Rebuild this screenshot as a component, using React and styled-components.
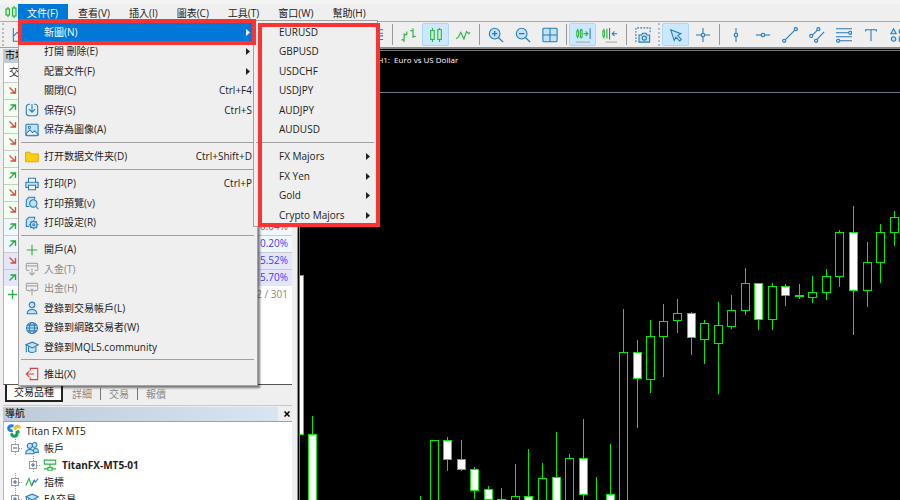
import React from 'react';
import styled, { createGlobalStyle, css } from 'styled-components';

const GlobalStyle = createGlobalStyle`
  * { box-sizing: border-box; }
  body {
    background: #efefef;
    color: #222;
    font: 10px/16px 'Open Sans', 'Noto Sans CJK TC', sans-serif;
    margin: 0;
    overflow: hidden;
  }
  button { color: inherit; font: inherit; }
  ul { list-style: none; margin: 0; padding: 0; }
`;

const Window = styled.div`
  display: flex;
  flex-direction: column;
  height: 100vh;
`;

const TitleStrip = styled.div`
  background: #f4f4f4;
  height: 4px;
`;

const MenuBar = styled.nav`
  align-items: stretch;
  display: flex;
  gap: 1px;
  height: 17px;
`;

const AppIcon = styled.svg`
  height: 14px;
  margin: 1px 0 0 5px;
  width: 12px;
`;

const MenuRoot = styled.div`
  position: relative;
`;

const MenuTitle = styled.button`
  background: ${props => props.$open ? '#0078d7' : 'transparent'};
  border: 0;
  color: ${props => props.$open ? '#fff' : '#222'};
  display: block;
  height: 17px;
  line-height: 16px;
  padding: 0 9px;
  white-space: nowrap;

  ${MenuRoot} & {
    padding-right: 10px;
  }
`;

const Popup = styled.ul`
  background: #efefef;
  border: 1px solid #a3a3a3;
  box-shadow: ${props => props.$shadow ? '2px 2px 2px rgba(0, 0, 0, 0.5)' : 'none'};
  color: #222;
  left: ${props => props.$left};
  padding: 2px 2px 1px;
  position: absolute;
  top: ${props => props.$top};
  width: ${props => props.$width};
  z-index: 5;
`;

const Entry = styled.li`
  height: 19px;
  position: relative;

  &:nth-child(even) {
    height: 20px;
  }
`;

const Command = styled.button`
  align-items: center;
  background: ${props => props.$active ? '#0078d7' : 'transparent'};
  border: 0;
  color: ${props => props.$active ? '#fff' : '#222'};
  display: flex;
  gap: 5px;
  height: 100%;
  line-height: 15px;
  padding: 0 3px 1px 4px;
  text-align: left;
  white-space: nowrap;
  width: 100%;

  &:disabled {
    color: #8a8a8a;
  }
`;

const IconSlot = styled.span`
  flex: none;
  height: 14px;
  width: 14px;

  svg {
    display: block;
    height: 14px;
    width: 14px;
  }
`;

const Label = styled.span`
  flex: 1;
`;

const Arrow = styled.svg`
  fill: currentColor;
  height: 7px;
  margin-right: 2px;
  width: 4px;
`;

const Divider = styled.li`
  border-bottom: 1px solid #a0a0a0;
  height: 3px;
  margin: 0 1px 4px 0;

  &:nth-child(even) {
    margin-bottom: 5px;
  }
`;

const Highlight = styled.div`
  border: 4px solid #fd3333;
  inset: ${props => props.$inset};
  pointer-events: none;
  position: absolute;
  z-index: 6;
`;

const Toolbar = styled.div`
  align-items: center;
  border-top: 1px solid #aaa;
  display: flex;
  height: 26px;
  overflow: hidden;
`;

const Tool = styled.button`
  align-items: center;
  background: ${props => props.$on ? '#cce8ff' : 'transparent'};
  border: 1px solid ${props => props.$on ? '#a9d8fb' : 'transparent'};
  border-radius: 2px;
  display: flex;
  flex: none;
  height: 23px;
  justify-content: center;
  padding: 0;
  width: 27px;

  svg {
    height: 16px;
    width: 16px;
  }
`;

const ToolSeparator = styled.span`
  border-left: 1px solid #999;
  flex: none;
  height: 21px;
  margin: 0 2px 0 3px;
`;

const Grip = styled.span`
  border-left: 2px dotted #bbb;
  flex: none;
  height: 23px;
  margin: 0 2px;
`;

const ToolGap = styled.span`
  flex: none;
  width: 329px;
`;

const Main = styled.main`
  display: flex;
  flex: 1;
  min-height: 0;
`;

const Sidebar = styled.aside`
  border-top: 1px solid #a0a0a0;
  display: flex;
  flex: none;
  flex-direction: column;
  overflow: hidden;
  padding: 1px 5px 0 3px;
  width: 297px;
`;

const PanelTitle = styled.h2`
  background: linear-gradient(90deg, #bdcbd9, #d9e6f3);
  color: #000;
  display: flex;
  flex: none;
  font-size: 10px;
  font-weight: 400;
  height: 14px;
  justify-content: space-between;
  line-height: 13px;
  margin: 0;
  padding-left: 2px;
`;

const CloseButton = styled.button`
  background: #efefef;
  border: 0;
  height: 14px;
  padding: 0 2px 0 6px;

  svg {
    display: block;
    height: 6px;
    width: 6px;
  }
`;

const Watch = styled.div`
  background: #fff;
  border-bottom: 1px solid #555;
  border-left: 1px solid #b5b5b5;
  flex: none;
  height: 322px;
`;

const Quotes = styled.table`
  border-collapse: collapse;
  width: 100%;

  th {
    font-weight: 400;
    height: 19px;
    padding: 0 5px;
    text-align: left;
  }

  td {
    height: 17px;
    line-height: 15px;
    padding: 0 4px;
  }

  td:last-child {
    text-align: right;
  }

  svg {
    display: block;
    height: 9px;
    width: 9px;
  }
`;

const tones = {
  green: '#f0fff0',
  blue: '#f0f8ff',
  violet: '#e6e6fa'
};

const QuoteRow = styled.tr`
  background: ${props => tones[props.$tone]};
  border-top: 1px solid #cbcbcb;
  color: ${props => props.$loss ? '#c63b3b' : '#3c3cff'};
`;

const TotalRow = styled.tr`
  color: #8a8a80;
`;

const Tabs = styled.div`
  align-items: flex-start;
  color: #8a8a8a;
  display: flex;
  flex: none;
  height: 20px;
  padding-left: 2px;
`;

const Tab = styled.button`
  background: transparent;
  border: 0;
  border-left: 1px solid ${props => props.$first ? 'transparent' : '#777'};
  height: 12px;
  line-height: 12px;
  margin-top: 3px;
  padding: 0 8px;

  ${props => props.$active && css`
    background: #fff;
    border: 2px solid #222;
    border-top: 0;
    color: #222;
    height: 17px;
    line-height: 15px;
    margin-top: 0;
    padding: 0 7px;
  `}
`;

const Navigator = styled.section`
  border-top: 1px solid #c8c8c8;
  display: flex;
  flex: 1;
  flex-direction: column;
  min-height: 0;
  padding-top: 1px;
`;

const Tree = styled.ul`
  background: #fff;
  border-left: 1px solid #b5b5b5;
  border-top: 1px solid #a0a0a0;
  flex: 1;
  min-height: 0;
  overflow: hidden;

  svg {
    flex: none;
    height: 14px;
    width: 14px;
  }
`;

const Node = styled.li`
  align-items: center;
  display: flex;
  font-weight: ${props => props.$bold ? 700 : 400};
  gap: 5px;
  height: 17px;
  line-height: 14px;
  padding-left: ${props => 3 + props.$depth * 18}px;
`;

const Expander = styled.svg`
  && {
    height: 17px;
    margin: 0 -7px 0 -14px;
    width: 16px;
  }
`;

const ChartFrame = styled.section`
  background: #000;
  border: solid #8a8a8a;
  border-width: 2px 0 0 1px;
  flex: 1;
  min-width: 0;
  padding: 1px 0 0 1px;
`;

const ChartView = styled.div`
  border: solid #777;
  border-width: 1px 0 0 1px;
  height: 100%;
  position: relative;
`;

const ChartTitle = styled.h1`
  color: #fff;
  font-size: 8px;
  font-weight: 400;
  left: 42px;
  line-height: 12px;
  margin: 0;
  position: absolute;
  top: 3px;
  white-space: pre;
`;

const Plot = styled.svg`
  display: block;
  height: 100%;
  width: 100%;
`;

const blue = { fill: '#bfe3f8', stroke: '#2a7ab8', strokeWidth: 1.2 };
const line = { fill: 'none', stroke: '#2a7ab8', strokeWidth: 1.2 };
const green = { fill: '#c9f5c9', stroke: '#2cb344', strokeWidth: 1.2 };
const greenLine = { fill: 'none', stroke: '#2cb344', strokeWidth: 1.3 };
const grey = { fill: 'none', stroke: '#aaa', strokeWidth: 1.3 };

const icons = {
  save: <g {...blue}><path fill="#e2f2fc" d="M5.500 1.500H4.500a3 3 0 0 0-3 3v7a3 3 0 0 0 3 3h7a3 3 0 0 0 3-3v-7a3 3 0 0 0-3-3h-1" /><path fill="none" d="M8 1v9.500M4.500 7 8 10.500 11.500 7" /></g>,
  image: <g {...blue}><rect x="1" y="1.500" width="14" height="13" rx="1" /><path fill="#fff" d="m1.500 12 4-4 3 3 2.500-2 4 4v1h-13.500z" /><circle cx="5" cy="5" r="1.200" fill="#fff" /></g>,
  folder: <path d="M.7 13.500v-11h5l1.500 2h8v9z" fill="#ffcc12" stroke="#d9a200" />,
  print: <g {...blue}><path fill="#fff" d="M4 6V1.500h8V6" /><path d="M1 12V6h14v6z" /><path fill="#fff" d="M4 9.500h8v5H4z" /></g>,
  preview: <g {...blue}><path d="M5 12H1.500V4.500l3-3H11V4" /><circle cx="9.500" cy="8.500" r="4.200" /><path d="m12.500 12 2.800 3" /></g>,
  setup: <g {...blue}><path d="M5 12H1.500V4.500l3-3H11V4" /><circle cx="10" cy="10" r="3.800" /><circle cx="10" cy="10" r="1.200" fill="#fff" /><path d="M10 4.500v2M10 13.500v2M4.500 10h2M13.500 10h2M6.200 6.200l1.300 1.300M12.500 12.500l1.300 1.300M13.800 6.200l-1.300 1.300M7.500 12.500l-1.300 1.300" /></g>,
  plus: <path d="M8 2v12M2 8h12" {...greenLine} />,
  deposit: <path d="M5 9.500H2.500q-1 0-1-1v-6q0-1 1-1h11q1 0 1 1v6q0 1-1 1H11M1.500 4.500h13M8 7v8M5 12l3 3 3-3" {...grey} />,
  withdraw: <path d="M5 9.500H2.500q-1 0-1-1v-6q0-1 1-1h11q1 0 1 1v6q0 1-1 1H11M1.500 4.500h13M8 15.500V8M5 11l3-3 3 3" {...grey} />,
  user: <g {...blue}><circle cx="8" cy="4.500" r="3.200" /><path d="M2.500 14.500c0-6.500 11-6.500 11 0z" /></g>,
  globe: <g {...blue}><circle cx="8" cy="8" r="6.300" /><ellipse cx="8" cy="8" rx="3" ry="6.300" /><path d="M1.700 8h12.600M2.700 4.700h10.600M2.700 11.300h10.600" /></g>,
  cap: <g {...blue}><path d="M4 7.500V13q4 2.500 8.500 0V7.500" /><path d="m.8 5.500 7.500-3 7 3-7 3.500z" /><path fill="none" d="M1.500 6v8" /></g>,
  exit: <path d="M6 4V1.500h8.500v13H6V12M10.500 8h-9M5 4.500 1.500 8 5 11.500" fill="none" stroke="#d9463f" strokeWidth="1.300" />,
  users: <g {...blue}><circle cx="11" cy="4.500" r="2.700" /><path d="M9 14q-.5-5.500 3-5.500t3.300 4.500H11" /><circle cx="5.500" cy="5.500" r="3" /><path d="M.8 14.500c0-6.500 9.700-6.500 9.700 0z" /></g>,
  server: <g {...greenLine}><path d="M1.500 2.500h13v4.500h-13zM8 7v4M1 12.500h4.500M10.500 12.500H15" /><path d="M5.500 11h5v3h-5z" /></g>,
  indicator: <g><path d="m1 12 3.500-8 3 8 3-6 1.500 2" {...greenLine} /><path d="m8 12 2.500-6 1.500 2 3-4" {...line} /></g>,
  logo: <g strokeWidth="3.400" fill="none"><path d="M7.500 2.500C3 1 1 4 2.500 6.500q1.500 2 4 1" stroke="#1b7ff0" /><path d="M9 6.500c.5-5 5.500-5 5-1.500" stroke="#f3bd18" /><path d="M5 10.500c1 5 7 4.500 6.500-1L14 8" stroke="#16a34a" /></g>,
  barChart: <path d="M3.500 17V7M3.500 8.500H7M.5 14.500h3M13.500 1.500v11M10.500 4h3M13.500 10.500h3M6.500 5v3.500" {...greenLine} />,
  candles: <g {...green}><path d="M5 1v3M5 14v3M13 1v3M13 14v3" /><rect x="3" y="4" width="4" height="10" /><rect x="11" y="3" width="4" height="11" /></g>,
  lineChart: <path d="m1 13 2.500-1L6.500 6l3.500 7.500L13 5l2.500 2.500L17 6" {...greenLine} />,
  zoomIn: <g {...blue}><circle cx="7.500" cy="7.500" r="6" /><path d="m12 12 5 5M4.500 7.500h6M7.500 4.500v6" strokeWidth="1.500" /></g>,
  zoomOut: <g {...blue}><circle cx="7.500" cy="7.500" r="6" /><path d="m12 12 5 5M4.500 7.500h6" strokeWidth="1.500" /></g>,
  tile: <g {...blue}><rect x="1" y="1.500" width="16" height="15" rx="1" /><path d="M9 1.500v15M1 9h16" /></g>,
  autoScroll: <g><path d="M3 2v11M7 2v11" {...greenLine} /><path d="M2 4.500h2v6H2zM6 3.500h2v8H6z" {...green} /><path d="M9.500 7.500H14M12 5l2.500 2.500L12 10" {...greenLine} /><path d="M17 1.500v12" {...line} /><path d="M1 17h16" stroke="#999" /></g>,
  shift: <g><path d="M2 2v11M5.500 2v11" {...greenLine} /><path d="M1 4.500h2v6H1z" {...green} /><path d="M8.500 1v13M17 7.500h-5M14 5l-2.500 2.500L14 10" {...line} /><path d="M4 17h13" stroke="#999" /></g>,
  camera: <g><path d="M1 17V1h16v5" strokeDasharray="2 1.500" {...line} /><g {...blue}><path d="M4.500 9h3l1-2h4l1 2h3v8h-12z" /><circle cx="10.500" cy="12.500" r="2.300" /></g></g>,
  windows: <g {...blue}><path d="M1 3h16M5 7h12M5 10h12M1 14h16" /></g>,
  areaChart: <path d="M1.500 1v15H17M2 10l4-4 3 3" {...line} />,
  cursor: <path d="m3 3 11.500 4.500-3.500 2 4 4.500-1.800 1.800-4.200-4.300-2 3.500z" {...blue} />,
  cross: <g {...blue}><path d="M9 1v16M1 9h16" /><circle cx="9" cy="9" r="2" /></g>,
  vertical: <g {...blue}><path d="M9 1v16" /><circle cx="9" cy="9" r="2" /></g>,
  horizontal: <g {...blue}><path d="M1 9h16" /><circle cx="9" cy="9" r="2" /></g>,
  trend: <g {...blue}><path d="M3 15 15 3" /><circle cx="2.500" cy="15.500" r="1.800" /><circle cx="15.500" cy="2.500" r="1.800" /></g>,
  channel: <g {...blue}><path d="m3 10 7-7M8 15l9-9.500" /><circle cx="2.500" cy="10" r="1.800" /><circle cx="10.500" cy="2.500" r="1.800" /><circle cx="8" cy="15.500" r="1.800" /></g>,
  fibo: <g {...blue}><path d="M0 2h18M0 6.500h18M0 11h18M0 15.500h18" /><circle cx="16" cy="6.500" r="1.800" /><circle cx="2.500" cy="15.500" r="1.800" /></g>,
  text: <path d="M3 5V3h12v2M9 3v13" {...line} />,
  shapes: <g {...blue}><path d="M4 2 1 7.500h6z" /><circle cx="13" cy="5" r="2.700" /><circle cx="4" cy="13.500" r="2.500" /><path d="M10.500 11h5v5h-5z" /></g>
};

function Icon({ name, size = 16 }) {
  return <svg viewBox={`0 0 ${size} ${size}`} aria-hidden="true">{icons[name]}</svg>;
}

const submenu = [
  { label: 'EURUSD' },
  { label: 'GBPUSD' },
  { label: 'USDCHF' },
  { label: 'USDJPY' },
  { label: 'AUDJPY' },
  { label: 'AUDUSD' },
  null,
  { label: 'FX Majors', more: true },
  { label: 'FX Yen', more: true },
  { label: 'Gold', more: true },
  { label: 'Crypto Majors', more: true }
];

const fileMenu = [
  { label: '新圖(N)', more: true, items: submenu },
  { label: '打開 刪除(E)', more: true },
  { label: '配置文件(F)', more: true },
  { label: '關閉(C)', keys: 'Ctrl+F4' },
  { label: '保存(S)', keys: 'Ctrl+S', icon: 'save' },
  { label: '保存為圖像(A)', icon: 'image' },
  null,
  { label: '打开数据文件夹(D)', keys: 'Ctrl+Shift+D', icon: 'folder' },
  null,
  { label: '打印(P)', keys: 'Ctrl+P', icon: 'print' },
  { label: '打印預覽(v)', icon: 'preview' },
  { label: '打印設定(R)', icon: 'setup' },
  null,
  { label: '開戶(A)', icon: 'plus' },
  { label: '入金(T)', icon: 'deposit', disabled: true },
  { label: '出金(H)', icon: 'withdraw', disabled: true },
  { label: '登錄到交易帳戶(L)', icon: 'user' },
  { label: '登錄到網路交易者(W)', icon: 'globe' },
  { label: '登錄到MQL5.community', icon: 'cap' },
  null,
  { label: '推出(X)', icon: 'exit' }
];

const menus = ['查看(V)', '插入(I)', '圖表(C)', '工具(T)', '窗口(W)', '幫助(H)'];

const tools = [
  '|', 'barChart', 'candles*', 'lineChart',
  '|', 'zoomIn', 'zoomOut', 'tile',
  '|', 'autoScroll*', 'shift',
  '|', 'camera',
  ':', 'cursor*', 'cross',
  '|', 'vertical', 'horizontal', 'trend', 'channel', 'fibo', 'text', 'shapes'
];

const quotes = [
  { tone: 'green' },
  { tone: 'green', up: true },
  { tone: 'green' },
  { tone: 'green' },
  { tone: 'green' },
  { tone: 'green', up: true },
  { tone: 'green' },
  { tone: 'green' },
  { tone: 'blue', up: true, change: '0.04%', loss: true },
  { tone: 'blue', up: true, change: '0.20%' },
  { tone: 'violet', change: '5.52%' },
  { tone: 'violet', up: true, change: '5.70%' }
];

// x, high, body top, body bottom, low, falling
const candles = [
  [0, 224, 224, 383, 383, 1],
  [13, 365, 383, 470, 470, 1],
  [121, 445, 470, 470, 470, 0],
  [135, 389, 389, 470, 470, 0],
  [148, 386, 389, 408, 420, 1],
  [162, 389, 408, 418, 420, 1],
  [175, 416, 418, 439, 448, 1],
  [189, 435, 438, 448, 460, 1],
  [202, 437, 448, 470, 470, 1],
  [216, 413, 445, 470, 470, 0],
  [229, 398, 445, 470, 470, 1],
  [243, 412, 427, 470, 470, 0],
  [257, 381, 426, 470, 470, 1],
  [270, 403, 407, 470, 470, 0],
  [284, 368, 407, 443, 470, 1],
  [297, 426, 443, 443, 470, 0],
  [311, 393, 443, 470, 470, 1],
  [324, 258, 301, 470, 470, 0],
  [338, 289, 301, 327, 377, 1],
  [351, 269, 285, 328, 342, 0],
  [364, 253, 270, 285, 326, 0],
  [378, 248, 262, 269, 282, 0],
  [392, 261, 262, 286, 304, 1],
  [405, 269, 272, 288, 313, 0],
  [419, 251, 274, 292, 343, 0],
  [432, 244, 259, 275, 278, 0],
  [446, 217, 232, 259, 264, 0],
  [459, 232, 232, 268, 279, 1],
  [473, 232, 235, 268, 279, 0],
  [486, 233, 235, 244, 255, 1],
  [500, 233, 244, 245, 248, 1],
  [513, 225, 241, 246, 252, 0],
  [527, 218, 225, 241, 249, 0],
  [540, 179, 181, 225, 236, 0],
  [554, 155, 181, 239, 284, 1],
  [568, 191, 211, 239, 256, 0],
  [581, 173, 181, 211, 232, 0],
  [595, 160, 166, 181, 195, 0]
];

function MenuList({ items, children, ...rest }) {
  return (
    <Popup {...rest}>
      {items.map((item, i) => item ? (
        <Entry key={item.label}>
          <Command $active={!!item.items} disabled={item.disabled}>
            <IconSlot>{item.icon && <Icon name={item.icon} />}</IconSlot>
            <Label>{item.label}</Label>
            {item.keys && <span>{item.keys}</span>}
            {item.more && <Arrow viewBox="0 0 4 7"><path d="M0 0l4 3.500L0 7z" /></Arrow>}
          </Command>
          {item.items && (
            <>
              <Highlight $inset="-4px -1px -3px -3px" />
              <MenuList items={item.items} $left="232px" $top="-3px" $width="125px">
                <Highlight $inset="2px -3px -1px 4px" />
              </MenuList>
            </>
          )}
        </Entry>
      ) : <Divider key={i} role="separator" />)}
      {children}
    </Popup>
  );
}

function MarketWatch() {
  return (
    <>
      <PanelTitle>市場</PanelTitle>
      <Watch>
        <Quotes>
          <thead>
            <tr><th colSpan="2">交易</th></tr>
          </thead>
          <tbody>
            {quotes.map((q, i) => (
              <QuoteRow key={i} $tone={q.tone} $loss={q.loss}>
                <td>
                  <svg viewBox="0 0 9 9" fill="none" stroke={q.up ? '#1fae38' : '#dc4a41'} strokeWidth="1.300">
                    <path d={q.up ? 'M1.500 7.500l5-5M2.500 2h5v5' : 'M1.500 1.500l5 5M7.500 2v5h-5'} />
                  </svg>
                </td>
                <td>{q.change}</td>
              </QuoteRow>
            ))}
            <TotalRow>
              <td><svg viewBox="0 0 9 9"><path d="M4.500 0v9M0 4.500h9" {...greenLine} /></svg></td>
              <td>12 / 301</td>
            </TotalRow>
          </tbody>
        </Quotes>
      </Watch>
      <Tabs>
        <Tab $active>交易品種</Tab>
        <Tab $first>詳細</Tab>
        <Tab>交易</Tab>
        <Tab>報價</Tab>
      </Tabs>
    </>
  );
}

function TreeNode({ icon, depth = 0, open, bold, children }) {
  return (
    <Node $depth={depth} $bold={bold}>
      {depth > 0 && (
        <Expander viewBox="0 0 16 17" fill="none" stroke="#999">
          <rect x=".5" y="5.500" width="7" height="7" />
          <path d={open ? 'M2 9h4' : 'M2 9h4M4 7v4'} stroke="#445a9a" />
          <path d="M8 9.500h4M4.500 0v5M4.500 13v4" strokeDasharray="1 1" />
        </Expander>
      )}
      <Icon name={icon} />
      <span>{children}</span>
    </Node>
  );
}

export default function App() {
  return (
    <Window>
      <GlobalStyle />
      <TitleStrip />
      <MenuBar>
        <AppIcon viewBox="0 0 12 14" {...green}>
          <path d="M3 2v10M9 1v12" />
          <rect x="1" y="4" width="3.500" height="6" />
          <rect x="7.500" y="3" width="3.500" height="8" />
        </AppIcon>
        <MenuRoot>
          <MenuTitle $open>文件(F)</MenuTitle>
          <MenuList items={fileMenu} $shadow $left="0" $top="16px" $width="240px" />
        </MenuRoot>
        {menus.map(m => <MenuTitle key={m}>{m}</MenuTitle>)}
      </MenuBar>
      <Toolbar>
        <Grip />
        <Tool aria-label="areaChart"><Icon name="areaChart" size={18} /></Tool>
        <ToolGap />
        <Tool aria-label="windows"><Icon name="windows" size={18} /></Tool>
        {tools.map((t, i) => {
          if (t === '|') return <ToolSeparator key={i} />;
          if (t === ':') return <Grip key={i} />;
          const name = t.replace('*', '');
          return <Tool key={i} aria-label={name} $on={t !== name}><Icon name={name} size={18} /></Tool>;
        })}
      </Toolbar>
      <Main>
        <Sidebar>
          <MarketWatch />
          <Navigator>
            <PanelTitle>
              導航
              <CloseButton aria-label="close">
                <svg viewBox="0 0 6 6"><path d="M.5.5l5 5M5.500.5l-5 5" stroke="#000" strokeWidth="1.500" /></svg>
              </CloseButton>
            </PanelTitle>
            <Tree>
              <TreeNode icon="logo">Titan FX MT5</TreeNode>
              <TreeNode icon="users" depth={1} open>帳戶</TreeNode>
              <TreeNode icon="server" depth={2} bold>TitanFX-MT5-01</TreeNode>
              <TreeNode icon="indicator" depth={1}>指標</TreeNode>
              <TreeNode icon="cap" depth={1}>EA交易</TreeNode>
            </Tree>
          </Navigator>
        </Sidebar>
        <ChartFrame>
          <ChartView>
            <ChartTitle>EURUSD, H1:  Euro vs US Dollar</ChartTitle>
            <Plot shapeRendering="crispEdges">
              <line x1="0" x2="100%" y1="41.500" y2="41.500" stroke="#66788a" />
              {candles.map(([x, high, top, bottom, low, falling]) => (
                <g key={x} stroke="#0e0" fill={falling ? '#fff' : '#000'}>
                  <line x1={x - 0.5} x2={x - 0.5} y1={high} y2={low} />
                  <rect x={x - 4.5} y={top + 0.5} width="8" height={bottom - top} />
                </g>
              ))}
            </Plot>
          </ChartView>
        </ChartFrame>
      </Main>
    </Window>
  );
}
